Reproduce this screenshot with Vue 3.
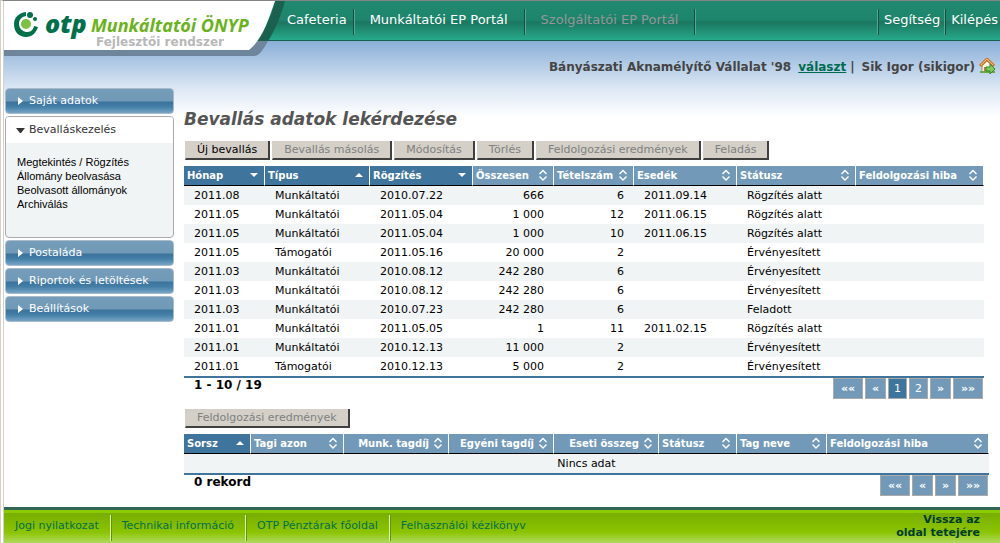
<script setup>
const portals = [
  { label: 'Cafeteria' },
  { label: 'Munkáltatói EP Portál' },
  { label: 'Szolgáltatói EP Portál', muted: true },
]
const submenu = ['Megtekintés / Rögzítés', 'Állomány beolvasása', 'Beolvasott állományok', 'Archiválás']
const closedItems = ['Postaláda', 'Riportok és letöltések', 'Beállítások']
const actions = ['Új bevallás', 'Bevallás másolás', 'Módosítás', 'Törlés', 'Feldolgozási eredmények', 'Feladás']

const columns = [
  { label: 'Hónap', sort: 'down', col: 'w81' },
  { label: 'Típus', sort: 'up', col: 'w105' },
  { label: 'Rögzítés', sort: 'down', col: 'w103' },
  { label: 'Összesen', sort: 'both', col: 'w81', num: true },
  { label: 'Tételszám', sort: 'both', col: 'w80', num: true },
  { label: 'Esedék', sort: 'both', col: 'w103' },
  { label: 'Státusz', sort: 'both', col: 'w119' },
  { label: 'Feldolgozási hiba', sort: 'both', col: 'rest' },
]
const rows = [
  ['2011.08', 'Munkáltatói', '2010.07.22', '666', '6', '2011.09.14', 'Rögzítés alatt', ''],
  ['2011.05', 'Munkáltatói', '2011.05.04', '1 000', '12', '2011.06.15', 'Rögzítés alatt', ''],
  ['2011.05', 'Munkáltatói', '2011.05.04', '1 000', '10', '2011.06.15', 'Rögzítés alatt', ''],
  ['2011.05', 'Támogatói', '2011.05.16', '20 000', '2', '', 'Érvényesített', ''],
  ['2011.03', 'Munkáltatói', '2010.08.12', '242 280', '6', '', 'Érvényesített', ''],
  ['2011.03', 'Munkáltatói', '2010.08.12', '242 280', '6', '', 'Érvényesített', ''],
  ['2011.03', 'Munkáltatói', '2010.07.23', '242 280', '6', '', 'Feladott', ''],
  ['2011.01', 'Munkáltatói', '2011.05.05', '1', '11', '2011.02.15', 'Rögzítés alatt', ''],
  ['2011.01', 'Munkáltatói', '2010.12.13', '11 000', '2', '', 'Érvényesített', ''],
  ['2011.01', 'Támogatói', '2010.12.13', '5 000', '2', '', 'Érvényesített', ''],
]
const detailColumns = [
  { label: 'Sorsz', sort: 'up', col: 'w67' },
  { label: 'Tagi azon', sort: 'both', col: 'w93' },
  { label: 'Munk. tagdíj', sort: 'both', col: 'w105', right: true },
  { label: 'Egyéni tagdíj', sort: 'both', col: 'w105', right: true },
  { label: 'Eseti összeg', sort: 'both', col: 'w105', right: true },
  { label: 'Státusz', sort: 'both', col: 'w78' },
  { label: 'Tag neve', sort: 'both', col: 'w90' },
  { label: 'Feldolgozási hiba', sort: 'both', col: 'rest' },
]
const sortPaths = {
  up: 'M1 8 L5 4 L9 8 Z',
  down: 'M1 4 L9 4 L5 8 Z',
  both: 'M1.5 5 L5 1.5 L8.5 5 M1.5 7.5 L5 11 L8.5 7.5',
}
const footerLinks = ['Jogi nyilatkozat', 'Technikai információ', 'OTP Pénztárak főoldal', 'Felhasználói kézikönyv']
</script>

<template>
  <div class="page">
    <header class="topbar">
      <svg class="logo" width="290" height="56" viewBox="0 0 290 56" aria-label="otp Munkáltatói ÖNYP">
        <path d="M245 40 C260 35 266 20 271 0 H281 C276 18 270 31 264 40 Z" fill="#1b614f" />
        <path d="M0 40 H264 C259 49 255 55 250 55 H0 Z" fill="#6f859b" />
        <path d="M0 0 H271 C264 20 258 39 245 49 H0 Z" fill="#fff" />
        <circle cx="22" cy="23" r="5" fill="#7dc142" />
        <path d="M22 11 C14 12 10 17 10 23 C10 31 15 36 22 36 C28 36 32 32 34 26 L30 25 C29 30 26 31 22 31 C18 30 15 27 15 23 C15 19 17 16 22 15 Z" fill="#00704a" />
        <circle cx="26" cy="14" r="3" fill="#00704a" />
        <circle cx="31" cy="18" r="2" fill="#00704a" />
        <text class="brand" x="41" y="32">otp</text>
        <text class="product" x="87" y="31">Munkáltatói ÖNYP</text>
        <text class="env" x="92" y="45">Fejlesztői rendszer</text>
      </svg>
      <nav class="portals">
        <a v-for="p in portals" :key="p.label" href="#" :class="{ muted: p.muted }">{{ p.label }}</a>
      </nav>
      <nav class="session">
        <a href="#">Segítség</a>
        <a href="#">Kilépés</a>
      </nav>
    </header>

    <div class="userbar">
      <span>Bányászati Aknamélyítő Vállalat '98</span>
      <a href="#">választ</a>
      <span>|</span>
      <span class="user">Sik Igor (sikigor)</span>
      <svg width="17" height="17" viewBox="0 0 17 17" aria-hidden="true">
        <path d="M3 8 V14 H13 V8 L8 3 Z" fill="#fff4dc" stroke="#b98b55" />
        <path d="M1 8 L8 1 L15 8" fill="none" stroke="#c87a37" stroke-width="3" />
        <path d="M2 7 L8 1 L14 7" fill="none" stroke="#f5bd76" stroke-width="1" />
        <path d="M5 9 H8 V14 H5 Z" fill="#bd8048" />
        <path d="M1 14 H16" stroke="#69a843" stroke-width="2" />
        <path d="M7 9 H11 V6 L16 11 L11 16 V13 H7 Z" fill="#7dcc55" stroke="#38862b" />
      </svg>
    </div>

    <div class="body">
      <aside class="sidebar">
        <button type="button" class="item"><i class="caret"></i>Saját adatok</button>
        <section class="panel">
          <button type="button" class="open"><i class="caret down"></i>Bevalláskezelés</button>
          <ul>
            <li v-for="s in submenu" :key="s"><a href="#">{{ s }}</a></li>
          </ul>
        </section>
        <button v-for="c in closedItems" :key="c" type="button" class="item"><i class="caret"></i>{{ c }}</button>
      </aside>

      <main>
        <h1>Bevallás adatok lekérdezése</h1>
        <div class="actions">
          <button v-for="(a, i) in actions" :key="a" type="button" class="btn" :disabled="i > 0">{{ a }}</button>
        </div>

        <section class="list">
          <table>
            <colgroup><col v-for="c in columns" :key="c.label" :class="c.col" /></colgroup>
            <thead>
              <tr>
                <th v-for="c in columns" :key="c.label" :class="{ sorted: c.sort !== 'both' }">
                  <div class="th">
                    <span>{{ c.label }}</span>
                    <svg width="10" height="13" viewBox="0 0 10 13" :class="c.sort"><path :d="sortPaths[c.sort]" /></svg>
                  </div>
                </th>
              </tr>
            </thead>
            <tbody>
              <tr v-for="(r, i) in rows" :key="i">
                <td v-for="(v, j) in r" :key="j" :class="{ num: columns[j].num }">{{ v }}</td>
              </tr>
            </tbody>
          </table>
          <div class="summary">
            <strong>1 - 10 / 19</strong>
            <nav class="pager">
              <button type="button" class="wide">««</button>
              <button type="button">«</button>
              <button type="button" class="page-no current">1</button>
              <button type="button" class="page-no">2</button>
              <button type="button">»</button>
              <button type="button" class="wide">»»</button>
            </nav>
          </div>
        </section>

        <div class="actions second">
          <button type="button" class="btn" disabled>Feldolgozási eredmények</button>
        </div>

        <section class="details">
          <table>
            <colgroup><col v-for="c in detailColumns" :key="c.label" :class="c.col" /></colgroup>
            <thead>
              <tr>
                <th v-for="c in detailColumns" :key="c.label" :class="{ sorted: c.sort !== 'both' }">
                  <div class="th" :class="{ right: c.right }">
                    <span>{{ c.label }}</span>
                    <svg width="10" height="13" viewBox="0 0 10 13" :class="c.sort"><path :d="sortPaths[c.sort]" /></svg>
                  </div>
                </th>
              </tr>
            </thead>
            <tbody>
              <tr><td colspan="8" class="empty">Nincs adat</td></tr>
            </tbody>
          </table>
          <div class="summary">
            <strong>0 rekord</strong>
            <nav class="pager">
              <button type="button" class="wide">««</button>
              <button type="button">«</button>
              <button type="button">»</button>
              <button type="button" class="wide">»»</button>
            </nav>
          </div>
        </section>
      </main>
    </div>

    <footer>
      <nav>
        <a v-for="f in footerLinks" :key="f" href="#">{{ f }}</a>
      </nav>
      <a href="#" class="top">Vissza az<br />oldal tetejére</a>
    </footer>
  </div>
</template>

<style>
body {
  background: #fff;
}
</style>

<style scoped>
* {
  box-sizing: border-box;
}
.page {
  min-height: 100vh;
  display: flex;
  flex-direction: column;
  border-top: 1px solid #848484;
  border-left: 4px double #d4d0c8;
  background: linear-gradient(#8aafd8, #dde8f4 48px, #fff 76px) 0 40px no-repeat;
  font: 11px/14px Verdana, "DejaVu Sans", sans-serif;
  color: #000;
}
a {
  color: inherit;
  text-decoration: none;
}
button {
  font: inherit;
  margin: 0;
}

.topbar {
  position: relative;
  height: 40px;
  display: flex;
  justify-content: space-between;
  padding-left: 275px;
  border-bottom: 1px solid #17604f;
  background: linear-gradient(#21896f 0, #1d856b 19px, #1b765f 21px, #1f8a70 28px, #28a98b 39px);
}
.logo {
  position: absolute;
  left: 0;
  top: 0;
}
.brand {
  font: italic 800 25px "Open Sans", sans-serif;
  fill: #00704a;
}
.product {
  font: italic 700 18px "Open Sans", sans-serif;
  fill: #69b31a;
}
.env {
  font: bold 12px Verdana, "DejaVu Sans", sans-serif;
  fill: #b8b8b8;
}
.portals,
.session {
  display: flex;
  align-items: flex-start;
  font-size: 13px;
  line-height: 22px;
  color: #fff;
}
.portals a,
.session a {
  height: 26px;
  margin-top: 8px;
  white-space: nowrap;
}
.portals a {
  padding: 0 16px;
  border-right: 1px solid #14503f;
  box-shadow: 1px 0 #55a794;
}
.portals a:first-child {
  padding: 0 6px 0 8px;
}
.portals .muted {
  color: #94979a;
}
.session a {
  padding: 0 5px;
  border-left: 1px solid #14503f;
  box-shadow: -1px 0 #55a794;
}
.session a:last-child {
  padding-right: 2px;
}

.userbar {
  height: 47px;
  display: flex;
  justify-content: flex-end;
  align-items: center;
  padding: 4px 4px 0 0;
  gap: 4px;
  font-size: 12px;
  font-weight: bold;
  color: #444;
}
.userbar a {
  color: #006b50;
  text-decoration: underline;
  margin-left: 3px;
}
.userbar .user {
  margin-left: 3px;
}

.body {
  display: flex;
  flex: 1;
  gap: 10px;
  padding: 0 11px 11px 1px;
}
.sidebar {
  width: 169px;
  flex: none;
  display: flex;
  flex-direction: column;
  gap: 2px;
}
.item,
.open {
  display: flex;
  align-items: center;
  gap: 6px;
  height: 26px;
  padding: 0 12px;
  border: 0;
  text-align: left;
}
.item {
  color: #fff;
  border: 1px solid #a9bac8;
  border-radius: 4px;
  background: linear-gradient(#759dba 0, #719ab8 12px, #3a739b 13px, #4580a8 18px, #7fabcb 25px);
}
.open {
  width: 100%;
  background: #fff;
  color: #333;
}
.caret {
  width: 5px;
  border: solid transparent;
  border-width: 4px 0 4px 5px;
  border-left-color: #fff;
}
.caret.down {
  width: 9px;
  margin: 0 -2px;
  border-width: 5px 4px 0;
  border-color: #333 transparent transparent;
}
.panel {
  border: 1px solid #aaa;
  border-radius: 4px;
  background: #f0f4f4;
  overflow: hidden;
}
.panel ul {
  list-style: none;
  margin: 0;
  padding: 12px 11px 26px;
  font: 11px/14px "Liberation Sans", Arial, sans-serif;
}

main {
  flex: 1;
  min-width: 0;
}
h1 {
  margin: 21px 0 12px;
  font-size: 17px;
  line-height: 20px;
  font-style: italic;
  color: #555;
}
.actions {
  display: flex;
  gap: 2px;
  padding-left: 1px;
}
.btn {
  height: 19px;
  padding: 0 11px;
  line-height: 15px;
  white-space: nowrap;
  background: #d4d0c8;
  color: #000;
  border: solid #404040;
  border-width: 0 2px 2px 1px;
  border-left-color: #d4d0c8;
}
.btn:disabled {
  color: #808080;
}

.list {
  margin: 6px 5px 0 0;
}
.details {
  margin-top: 6px;
}
table {
  width: 100%;
  table-layout: fixed;
  border-collapse: separate;
  border-spacing: 0;
  border-bottom: 2px solid #3f759d;
}
.w67 { width: 67px; }
.w78 { width: 78px; }
.w80 { width: 80px; }
.w81 { width: 81px; }
.w90 { width: 90px; }
.w93 { width: 93px; }
.w103 { width: 103px; }
.w105 { width: 105px; }
.w119 { width: 119px; }
th {
  height: 20px;
  padding: 0 5px 0 3px;
  text-align: left;
  font-size: 10px;
  line-height: 14px;
  color: #fff;
  background: #729ab8;
  border-right: 1px solid #fff;
  border-bottom: 1px solid #000;
  white-space: nowrap;
}
th.sorted {
  background: #3f759d;
}
.th {
  display: flex;
  justify-content: space-between;
  align-items: center;
}
.th.right {
  justify-content: flex-end;
  gap: 4px;
}
.th svg {
  flex: none;
  fill: #fff;
}
.th svg.both {
  fill: none;
  stroke: #fff;
  stroke-width: 1.4;
}
td {
  height: 19px;
  padding: 0 10px;
  line-height: 19px;
  white-space: nowrap;
}
tbody tr:nth-child(odd) {
  background: #f0f4f4;
}
.num {
  text-align: right;
}
.empty {
  text-align: center;
}
.summary {
  display: flex;
  justify-content: space-between;
  padding: 0 1px 0 10px;
  font-size: 12px;
}
.pager {
  display: flex;
  gap: 2px;
  font-size: 11px;
}
.pager button {
  width: 21px;
  height: 21px;
  padding: 0;
  line-height: 17px;
  font-weight: bold;
  color: #fff;
  background: #729ab8;
  border: 1px solid #aaa;
}
.pager .wide {
  width: 30px;
}
.pager .page-no {
  width: 19px;
  font-weight: normal;
}
.pager .current {
  background: #3f759d;
}
.second {
  margin-top: 10px;
}

footer {
  display: flex;
  justify-content: space-between;
  height: 36px;
  padding-right: 20px;
  border-top: 3px solid #336655;
  background: linear-gradient(#8ccb00 0, #8ccb00 3px, #78ae00 3px, #8bc400 22px, #b0d95e 33px);
}
footer nav {
  display: flex;
  padding-top: 5px;
  line-height: 22px;
  color: #00704a;
}
footer nav a {
  height: 26px;
  padding: 0 11px;
  border-right: 1px solid #e0f0b8;
  box-shadow: 1px 0 #5f9410;
}
footer nav a:last-child {
  border: 0;
  box-shadow: none;
}
.top {
  padding-top: 3px;
  text-align: right;
  font-weight: bold;
  line-height: 13px;
  color: #003c2c;
}
</style>
